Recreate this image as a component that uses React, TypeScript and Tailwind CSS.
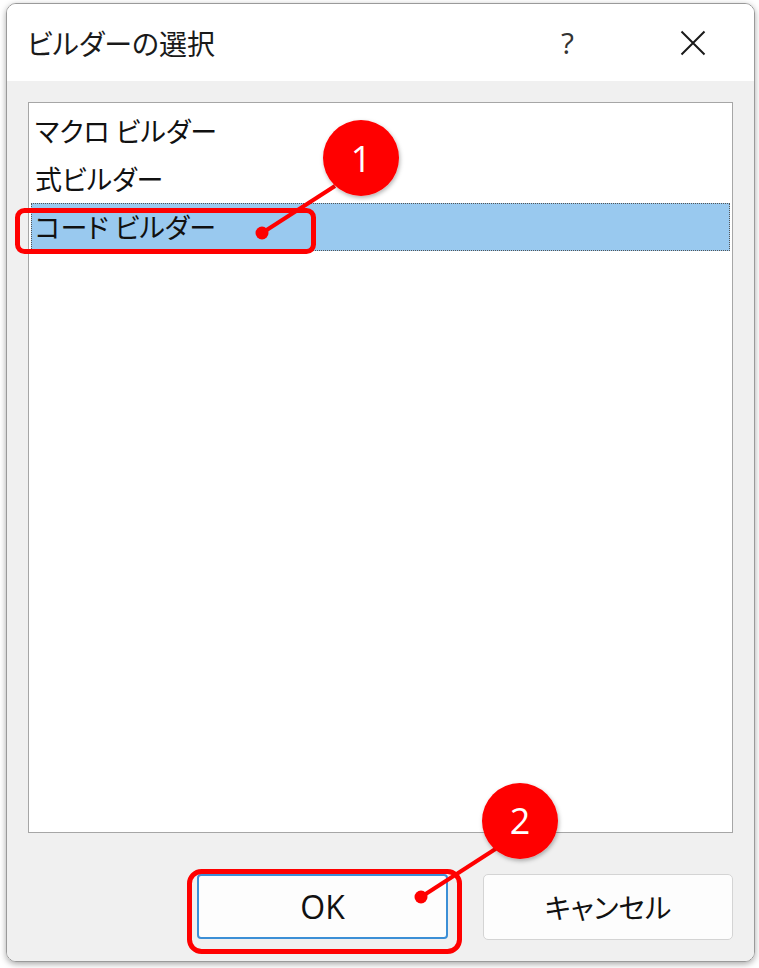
import React from 'react';

const jp = "font-['Noto_Sans_CJK_JP','Noto_Sans',sans-serif] [font-feature-settings:'palt']";

const items = ['マクロ ビルダー', '式ビルダー', 'コード ビルダー'];

function Annotations() {
  return (
    <svg className="pointer-events-none absolute inset-0" width={759} height={968} viewBox="0 0 759 968">
      <defs>
        <filter id="sh" x="-20%" y="-20%" width="140%" height="140%">
          <feDropShadow dx="1" dy="2" stdDeviation="2" floodColor="#000" floodOpacity="0.3" />
        </filter>
      </defs>
      <rect x={17.5} y={210.5} width={296} height={41} rx={7} fill="none" stroke="#ff0000" strokeWidth={5} />
      <line x1={335} y1={186} x2={262} y2={233} stroke="#ff0000" strokeWidth={4} />
      <circle cx={262} cy={233} r={6.5} fill="#ff0000" />
      <circle cx={361} cy={158} r={38} fill="#ff0000" filter="url(#sh)" />
      <text x={361} y={172} textAnchor="middle" fill="#fff" fontSize={36} fontFamily="Open Sans, sans-serif">1</text>

      <rect x={189.5} y={871.5} width={270} height={80} rx={12} fill="none" stroke="#ff0000" strokeWidth={5} />
      <line x1={497} y1={848} x2={421} y2={897} stroke="#ff0000" strokeWidth={4} />
      <circle cx={421} cy={897} r={6.5} fill="#ff0000" />
      <circle cx={520} cy={821} r={38} fill="#ff0000" filter="url(#sh)" />
      <text x={520} y={834} textAnchor="middle" fill="#fff" fontSize={36} fontFamily="Open Sans, sans-serif">2</text>
    </svg>
  );
}

export default function App() {
  return (
    <div className="relative h-[968px] w-[759px] overflow-hidden bg-white">
      <div className="flex h-full flex-col pl-[6px] pt-[3px]">
        <div className="flex h-[959px] w-[749px] flex-col overflow-hidden rounded-[10px] border border-[#9a9a9a] shadow-[0_2px_6px_rgba(0,0,0,0.35)]">
          {/* Title bar */}
          <div className="flex h-[77px] shrink-0 items-center bg-white">
            <span className={`pl-[20px] text-[28px] leading-none text-[#1a1a1a] ${jp}`}>ビルダーの選択</span>
            <span className="ml-auto mr-[106px] text-[30px] leading-none text-[#333] font-['Open_Sans',sans-serif]">?</span>
            <svg width="26" height="26" viewBox="0 0 26 26" className="mr-[48px]">
              <path d="M1.5 1.5 L24.5 24.5 M24.5 1.5 L1.5 24.5" stroke="#1a1a1a" strokeWidth="2" />
            </svg>
          </div>

          {/* Body */}
          <div className="flex flex-1 flex-col bg-[#f0f0f0] px-[21px] pt-[21px]">
            <div className="h-[731px] border border-[#a6a6a6] bg-white px-[2px] pt-[4px]">
              {items.map((it, i) => (
                <div
                  key={it}
                  className={`flex h-[48px] items-center pl-[3px] text-[27px] text-[#111] ${jp} ${
                    i === 2 ? 'border border-dotted border-[#555] bg-[#99c9ef]' : 'border border-transparent'
                  }`}
                >
                  {it}
                </div>
              ))}
            </div>

            <div className="mt-[41px] flex justify-end gap-[35px]">
              <button className="h-[65px] w-[251px] rounded-[4px] border-2 border-[#3c8fd6] bg-[#fdfdfd] text-[32px] text-[#111] font-['Open_Sans',sans-serif]">
                OK
              </button>
              <button className={`h-[66px] w-[250px] rounded-[5px] border border-[#d4d4d4] bg-[#fdfdfd] text-[28px] text-[#111] ${jp}`}>
                キャンセル
              </button>
            </div>
          </div>
        </div>
      </div>
      <Annotations />
    </div>
  );
}
